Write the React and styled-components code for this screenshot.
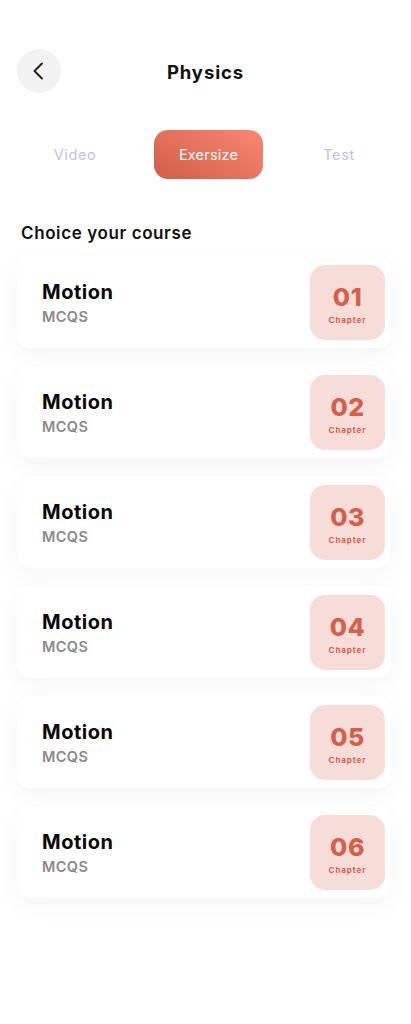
import styled, { createGlobalStyle } from "styled-components";

const GlobalStyle = createGlobalStyle`
  body {
    margin: 0;
    background: #ffffff;
    font-family: "Inter", "Noto Sans", sans-serif;
  }
`;

const Screen = styled.div`
  width: 411px;
  min-height: 1024px;
  background: #fff;
  padding: 49px 17px 0 17px;
  box-sizing: border-box;
`;

const Header = styled.div`
  display: grid;
  grid-template-columns: 44px 1fr 44px;
  align-items: center;
`;

const BackButton = styled.button`
  width: 44px;
  height: 44px;
  border-radius: 50%;
  border: none;
  background: #f2f2f2;
  display: flex;
  align-items: center;
  justify-content: center;
  padding: 0;
`;

const Title = styled.h1`
  margin: 2px 0 0 0;
  text-align: center;
  font-size: 18.5px;
  font-weight: 700;
  letter-spacing: 0.9px;
  color: #111;
`;

const Tabs = styled.div`
  display: grid;
  grid-template-columns: 116px 109px 1fr;
  align-items: center;
  margin-top: 37px;
  column-gap: 21px;
`;

const Tab = styled.div`
  height: 49px;
  display: flex;
  align-items: center;
  justify-content: center;
  font-size: 14.5px;
  letter-spacing: ${(p) => (p.$active ? "0.2px" : "0.6px")};
  border-radius: 14px;
  color: ${(p) => (p.$active ? "#fff" : "#c4c1dd")};
  background: ${(p) =>
    p.$active ? "linear-gradient(30deg, #d15d48 0%, #f98772 100%)" : "transparent"};
`;

const SectionTitle = styled.h2`
  margin: 44px 0 0 4px;
  font-size: 17px;
  font-weight: 600;
  letter-spacing: 0.6px;
  color: #111;
`;

const List = styled.div`
  display: flex;
  flex-direction: column;
  gap: 18px;
  margin-top: 13px;
`;

const Card = styled.div`
  display: flex;
  align-items: center;
  justify-content: space-between;
  width: 374px;
  height: 92px;
  box-sizing: border-box;
  padding: 0 6px 0 25px;
  background: #fff;
  border-radius: 14px;
  box-shadow: 0 8px 24px rgba(0, 0, 0, 0.045);
`;

const Info = styled.div`
  display: flex;
  flex-direction: column;
  gap: 4px;
`;

const CardTitle = styled.div`
  font-size: 20px;
  font-weight: 700;
  letter-spacing: 0.5px;
  color: #0a0a0a;
`;

const CardSub = styled.div`
  font-size: 14.5px;
  font-weight: 600;
  letter-spacing: 0.4px;
  color: #8a8a8a;
`;

const Chapter = styled.div`
  width: 75px;
  height: 75px;
  box-sizing: border-box;
  padding-top: 5px;
  border-radius: 15px;
  background: #f7ddd8;
  color: #d65f4a;
  display: flex;
  flex-direction: column;
  align-items: center;
  justify-content: center;
`;

const ChapterNum = styled.div`
  font-size: 25px;
  font-weight: 800;
  line-height: 1;
  letter-spacing: 0.5px;
`;

const ChapterLabel = styled.div`
  font-size: 8px;
  font-weight: 700;
  letter-spacing: 0.9px;
  margin-top: 5px;
`;

const chapters = ["01", "02", "03", "04", "05", "06"];

export default function App() {
  return (
    <Screen>
      <GlobalStyle />
      <Header>
        <BackButton aria-label="Back">
          <svg width="20" height="20" viewBox="0 0 20 20" fill="none">
            <path d="M13 2.5 5.5 10l7.5 7.5" stroke="#2a1a14" strokeWidth="1.9" strokeLinecap="round" strokeLinejoin="round" />
          </svg>
        </BackButton>
        <Title>Physics</Title>
        <span />
      </Header>
      <Tabs>
        <Tab>Video</Tab>
        <Tab $active>Exersize</Tab>
        <Tab>Test</Tab>
      </Tabs>
      <SectionTitle>Choice your course</SectionTitle>
      <List>
        {chapters.map((n) => (
          <Card key={n}>
            <Info>
              <CardTitle>Motion</CardTitle>
              <CardSub>MCQS</CardSub>
            </Info>
            <Chapter>
              <ChapterNum>{n}</ChapterNum>
              <ChapterLabel>Chapter</ChapterLabel>
            </Chapter>
          </Card>
        ))}
      </List>
    </Screen>
  );
}
